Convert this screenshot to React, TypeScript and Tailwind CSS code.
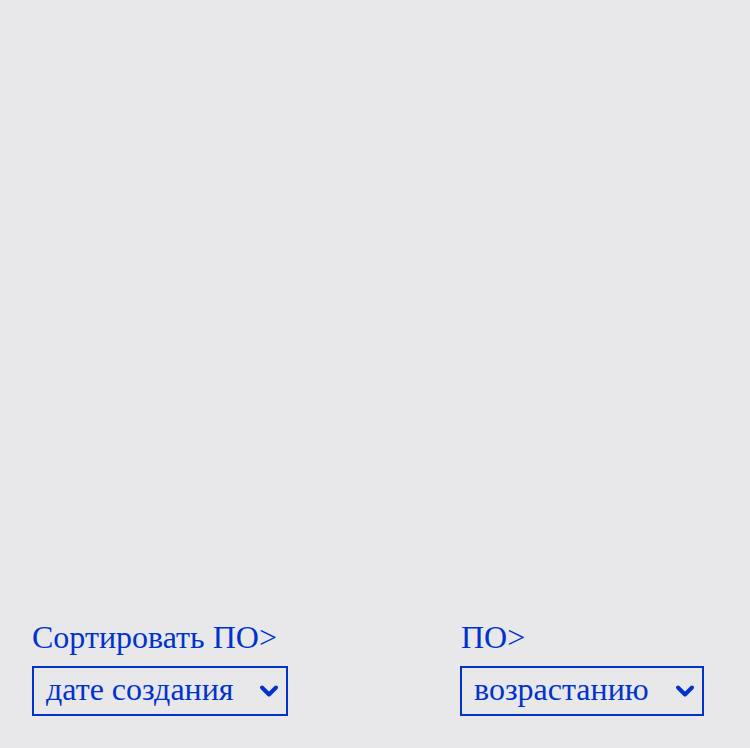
import React from "react";

function Chevron() {
  return (
    <svg width="20" height="14" viewBox="0 0 20 14" className="shrink-0">
      <path d="M3 3.5 L10 10.5 L17 3.5" fill="none" stroke="#0033cc" strokeWidth="4" strokeLinecap="round" strokeLinejoin="round" />
    </svg>
  );
}

function FakeSelect({ value, width }: { value: string; width: string }) {
  return (
    <div className={`${width} h-[50px] border-2 border-[#0033cc] flex items-center justify-between pl-3 pr-[7px]`}>
      <span className="text-[32px] leading-none text-[#0033cc] pb-1">{value}</span>
      <Chevron />
    </div>
  );
}

export default function App() {
  return (
    <div
      className="h-[748px] w-[750px] bg-[#e8e8ea] flex flex-col justify-end pb-8 pl-8"
      style={{ fontFamily: '"Liberation Serif", "Times New Roman", serif' }}
    >
      <div className="flex items-end">
        <div className="flex flex-col w-[428px]">
          <div className="text-[32px] leading-[36px] text-[#0033cc] mb-[11px]">Сортировать ПО&gt;</div>
          <FakeSelect value="дате создания" width="w-[256px]" />
        </div>
        <div className="flex flex-col">
          <div className="text-[32px] leading-[36px] text-[#0033cc] mb-[11px] pl-px">ПО&gt;</div>
          <FakeSelect value="возрастанию" width="w-[244px]" />
        </div>
      </div>
    </div>
  );
}
